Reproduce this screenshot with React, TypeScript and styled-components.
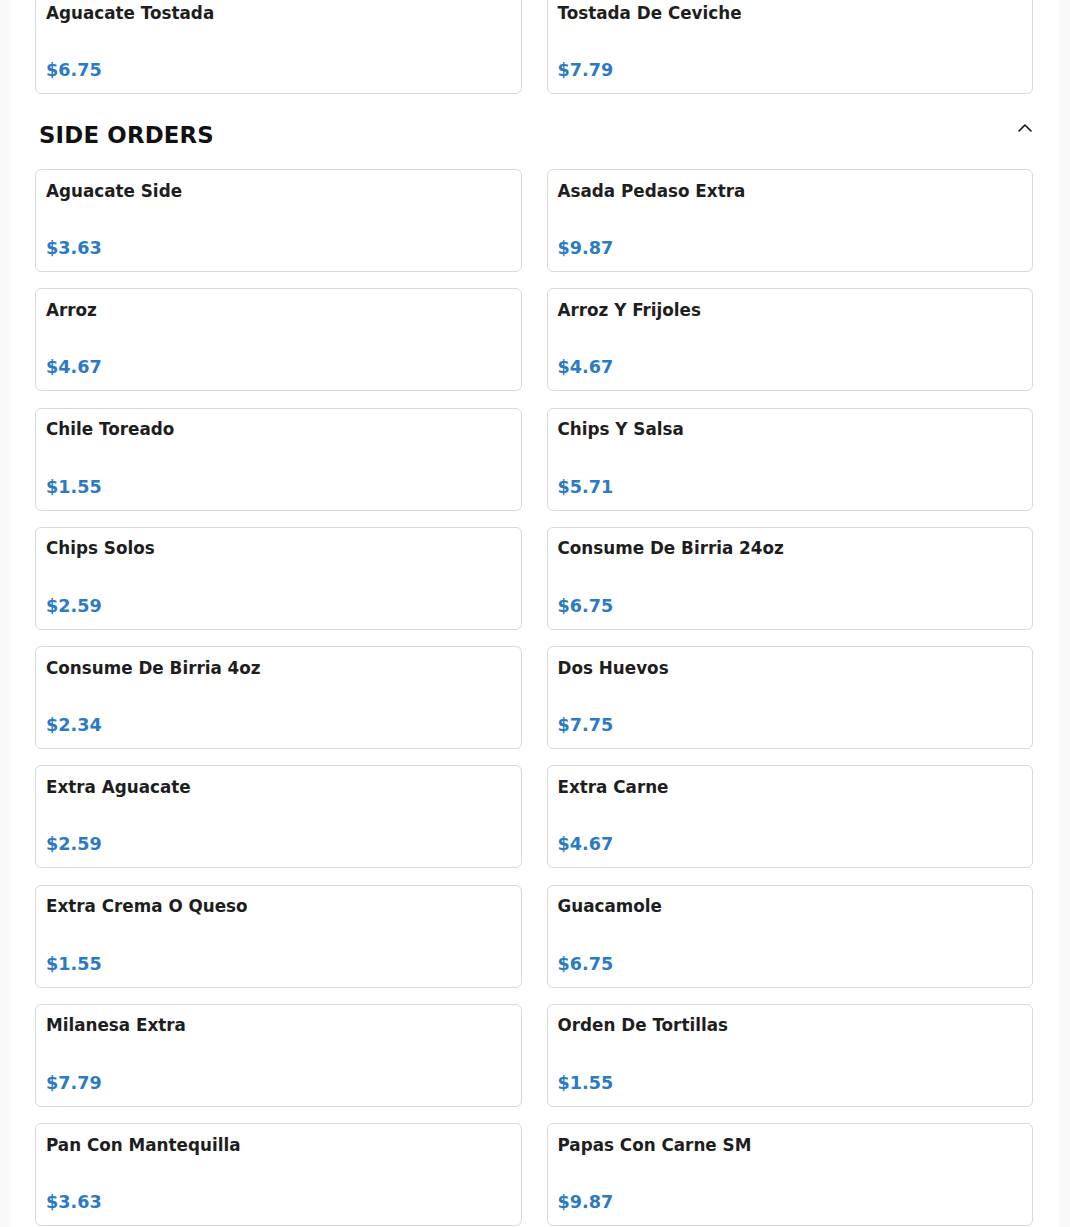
import styled, { createGlobalStyle } from 'styled-components';
import { ChevronUp } from 'lucide-react';

type Item = { name: string; price: string };

const previous: Item[] = [
  { name: 'Aguacate Tostada', price: '$6.75' },
  { name: 'Tostada De Ceviche', price: '$7.79' },
];

const sideOrders: Item[] = [
  { name: 'Aguacate Side', price: '$3.63' },
  { name: 'Asada Pedaso Extra', price: '$9.87' },
  { name: 'Arroz', price: '$4.67' },
  { name: 'Arroz Y Frijoles', price: '$4.67' },
  { name: 'Chile Toreado', price: '$1.55' },
  { name: 'Chips Y Salsa', price: '$5.71' },
  { name: 'Chips Solos', price: '$2.59' },
  { name: 'Consume De Birria 24oz', price: '$6.75' },
  { name: 'Consume De Birria 4oz', price: '$2.34' },
  { name: 'Dos Huevos', price: '$7.75' },
  { name: 'Extra Aguacate', price: '$2.59' },
  { name: 'Extra Carne', price: '$4.67' },
  { name: 'Extra Crema O Queso', price: '$1.55' },
  { name: 'Guacamole', price: '$6.75' },
  { name: 'Milanesa Extra', price: '$7.79' },
  { name: 'Orden De Tortillas', price: '$1.55' },
  { name: 'Pan Con Mantequilla', price: '$3.63' },
  { name: 'Papas Con Carne SM', price: '$9.87' },
];

const GlobalStyle = createGlobalStyle`
  body {
    margin: 0;
    background: #f9f9f9;
    font-family: "DejaVu Sans", "Liberation Sans", sans-serif;
  }
`;

const Panel = styled.div`
  margin: -9px 11px 0;
  background: #fff;
  padding: 0 26px 20px 24px;
`;

const Grid = styled.div`
  display: grid;
  grid-template-columns: 1fr 1fr;
  column-gap: 25px;
  row-gap: 16.25px;
`;

const Card = styled.div`
  box-sizing: border-box;
  height: 103px;
  border: 1px solid #d9d9d9;
  border-radius: 6px;
  padding: 10.5px 10px 13px;
  display: flex;
  flex-direction: column;
  justify-content: space-between;
  cursor: pointer;
`;

const Name = styled.div`
  font-size: 16.8px;
  font-weight: bold;
  color: #1e1e1e;
`;

const Price = styled.div`
  font-size: 17.6px;
  font-weight: bold;
  color: #2b7bc4;
`;

const SectionHeader = styled.div`
  display: flex;
  justify-content: space-between;
  align-items: flex-start;
  padding: 28px 0 0 4px;
  margin-bottom: 21px;
`;

const Title = styled.h2`
  margin: 0;
  font-size: 22.8px;
  font-weight: bold;
  color: #111;
  letter-spacing: 0.2px;
`;

const Toggle = styled.span`
  display: flex;
  margin: -6px -4px 0 0;
  color: #111;
`;

const ItemGrid = ({ items }: { items: Item[] }) => (
  <Grid>
    {items.map((it) => (
      <Card key={it.name}>
        <Name>{it.name}</Name>
        <Price>{it.price}</Price>
      </Card>
    ))}
  </Grid>
);

export default function App() {
  return (
    <>
      <GlobalStyle />
      <Panel>
        <ItemGrid items={previous} />
        <SectionHeader>
          <Title>SIDE ORDERS</Title>
          <Toggle>
            <ChevronUp size={24} strokeWidth={1.6} />
          </Toggle>
        </SectionHeader>
        <ItemGrid items={sideOrders} />
      </Panel>
    </>
  );
}
